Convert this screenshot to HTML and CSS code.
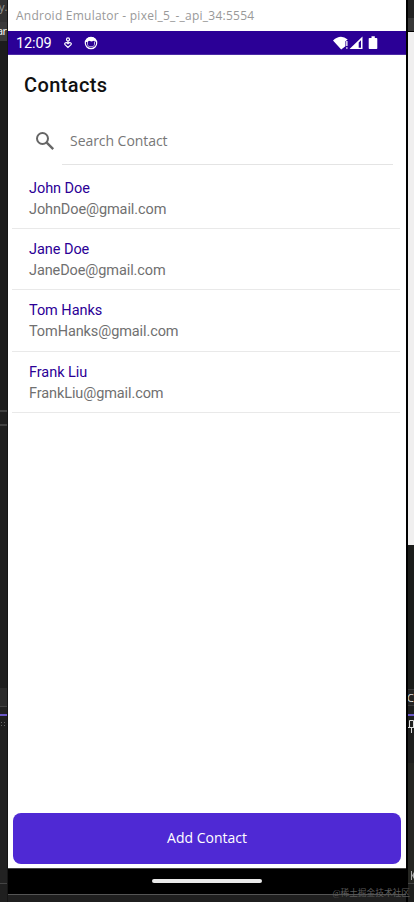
FILE: index.html
```html
<!DOCTYPE html>
<html lang="en">
<head>
<meta charset="utf-8">
<title>Contacts</title>
<link rel="stylesheet" href="styles.css">
</head>
<body>
<div class="desktop">
  <aside class="side left">
    <div class="menu"><span>y.</span></div>
    <div class="tab"><span>ar</span></div>
    <div class="editor"></div>
    <div class="pane"></div>
    <div class="toolbar"></div>
    <div class="accent"></div>
    <div class="dots"></div>
    <div class="panel"></div>
  </aside>
  <main class="window">
    <header class="titlebar"><span>Android Emulator - pixel_5_-_api_34:5554</span></header>
    <div class="status">
      <time>12:09</time>
      <svg class="download" width="10" height="12" viewBox="0 0 10 12" fill="none" stroke="currentColor" stroke-width="1.2"><circle cx="5" cy="2.4" r="1.5"/><path d="M5 4v2M5 10.500 2 7.700C.8 5.800 3.600 4.600 5 6.700 6.400 4.600 9.200 5.800 8 7.700Z"/></svg>
      <svg class="face" width="14" height="14" viewBox="0 0 14 14"><circle cx="7" cy="7" r="5.7" fill="none" stroke="currentColor" stroke-width="1.2"/><path d="M1.500 6C2 2.500 4 1 7 1s5 1.500 5.500 5L10 4.800 7.500 5.500 5 4.800 3.500 6Z" fill="currentColor"/><path d="M3.500 5.500v3c0 3 7 3 7 0v-3" fill="none" stroke="currentColor" stroke-width=".7"/></svg>
      <svg class="radio" width="47" height="16" viewBox="0 0 47 16" fill="currentColor"><path d="M0 5.500Q7.500-1.500 14.700 4.500L12.400 6.200v5L8.200 14.500Z"/><path d="M13.200 6h1.300v5h-1.300zM13.200 12.300h1.300v1.500h-1.300z"/><path fill-rule="evenodd" d="M16.500 14 29.500 1.500V14ZM25.700 7.500V12.700H28V5.200Z"/><path d="M36.500 3h2V1.300h3.300V3h1.700q.8 0 .8.800v9.500q0 .8-.8.800h-7q-.8 0-.8-.8V3.800q0-.8.800-.8Z"/></svg>
    </div>
    <h1><span>Contacts</span></h1>
    <label class="search">
      <svg width="20" height="20" viewBox="0 0 20 20" fill="none" stroke="currentColor" stroke-width="2"><circle cx="7.500" cy="7.500" r="5.500"/><path d="m11.700 11.700 6.500 6.500" stroke-width="2.400"/></svg>
      <span class="field"><span class="hint">Search Contact</span></span>
    </label>
    <ul>
      <li><b><span>John Doe</span></b><p><span>JohnDoe@gmail.com</span></p></li>
      <li><b><span>Jane Doe</span></b><p><span>JaneDoe@gmail.com</span></p></li>
      <li><b><span>Tom Hanks</span></b><p><span>TomHanks@gmail.com</span></p></li>
      <li><b><span>Frank Liu</span></b><p><span>FrankLiu@gmail.com</span></p></li>
    </ul>
    <button><span>Add Contact</span></button>
    <footer><i></i></footer>
  </main>
  <aside class="side right">
    <div class="menu"></div>
    <div class="tab"></div>
    <div class="page"></div>
    <div class="pane"></div>
    <div class="toolbar"><span>C</span></div>
    <div class="gap"></div>
    <div class="accent"></div>
    <div class="pin"><svg width="6" height="13" viewBox="0 0 6 13" fill="none" stroke="currentColor"><path d="M1.500 7V.500H5.500V7M0 7.500h6M3.500 8v5"/></svg></div>
    <div class="panel"><svg width="3" height="9" viewBox="0 0 3 9" fill="currentColor"><path d="M0 0h1v9H0zM3 1v7L1 4.500Z"/></svg></div>
  </aside>
  <div class="watermark">@稀土掘金技术社区</div>
</div>
</body>
</html>
```
FILE: styles.css
```css
* { box-sizing: border-box; }
body { margin: 0; background: #1f1f1f; }
.desktop {
  position: relative;
  display: grid;
  grid-template-columns: 8px 398px 8px;
  width: 414px;
  height: 902px;
  overflow: hidden;
  font-family: "Roboto", sans-serif;
  white-space: nowrap;
}
svg { display: block; flex: none; }

.side { display: flex; flex-direction: column; overflow: hidden; background: #1f1f1f; color: #ddd; }
.side > div { flex: none; overflow: hidden; }
.left { border-right: 1px solid #151515; }
.left .menu { height: 22px; background: #333; color: #999; font: 11px/14px "Open Sans", sans-serif; }
.left .menu span { margin-left: -1px; }
.left .tab { height: 19px; background: #3a3a3a; font: 11px/17px "Open Sans", sans-serif; color: #fff; }
.left .tab span { margin-left: -3px; letter-spacing: -.5px; }
.left .editor { height: 369px; background: #1c1c1c; }
.left .pane { height: 278px; background: linear-gradient(#414141 2px, #1f1f1f 2px 14px, #414141 14px 16px, #1f1f1f 16px); }
.left .toolbar { height: 26px; background: linear-gradient(#2c2c2c 18px, #444 18px 19px, #222 19px); }
.accent { height: 2px; background: #6a57c6; }
.left .dots { height: 14px; background: radial-gradient(#666 .6px, transparent .8px) 0 2px / 3px 3px; background-clip: content-box; padding: 6px 0 2px; }
.left .panel { height: 154px; background: #222; border-bottom: 1px solid #444; }

.window { display: flex; flex-direction: column; height: 895px; padding-top: 1px; border-bottom: 1px solid #555; background: #fff; min-width: 0; }
.titlebar { height: 30px; padding-left: 8px; color: #999; font: 12px/30px "Open Sans", sans-serif; letter-spacing: .24px; }
.status { display: flex; align-items: center; height: 24px; padding-left: 8px; background: #2b0096; color: #fff; border-bottom: 1px solid #4c2ba5; }
.status time { width: 47px; padding-top: 2px; font-size: 14.500px; line-height: 22px; letter-spacing: -.1px; }
.status .face { margin-left: 11px; }
.status .radio { margin-left: 235px; }
h1 { margin: 0; height: 66px; padding-left: 16px; color: #111; font-size: 20px; font-weight: 500; line-height: 60px; letter-spacing: .38px; }
.search { display: flex; height: 44px; color: #666; }
.search svg { margin: 10px 7px 0 27px; }
.field { width: 331px; padding-left: 8px; border-bottom: 1px solid #e4e4e4; font: 14px/40px "Open Sans", sans-serif; letter-spacing: -.05px; color: #777; }
ul { margin: 0; padding: 0 6px 0 4px; list-style: none; }
li { height: 61px; padding: 10px 17px 0; border-bottom: 1px solid #e9e9e9; }
li:first-child { height: 64px; padding-top: 13px; }
li:nth-child(3) { height: 62px; padding-top: 10px; }
b, p { display: block; margin: 0; font-size: 14.500px; font-weight: 400; line-height: 21px; letter-spacing: -.05px; }
b { color: #2b0096; }
p { color: #707070; letter-spacing: -.1px; }
button { height: 51px; margin: auto 5px 4px; padding: 0 0 1px; border: 0; border-radius: 8px; background: #4f29d4; color: #fff; font: 14px/50px "Open Sans", sans-serif; }
footer { display: flex; align-items: center; justify-content: center; height: 26px; padding-bottom: 2px; background: #000; border-top: 1px solid #444; }
footer i { width: 110px; height: 4px; border-radius: 2px; background: #e9e9e9; }

.right { border-left: 2px solid #000; background: #1e1f1e; }
.right .menu { height: 18px; background: #222; }
.right .tab { height: 14px; background: #383838; border-bottom: 1px solid #000; }
.right .page { height: 513px; background: #f0efef; }
.right .pane { height: 144px; background: #1b1c1a; }
.right .toolbar { height: 17px; background: #242424; border: solid #393939; border-width: 1px 0; font: 11px/15px "Open Sans", sans-serif; }
.right .toolbar span { margin-left: -1px; }
.right .gap { height: 8px; }
.right .pin { height: 47px; padding-top: 4px; }
.right .panel { height: 121px; padding-top: 108px; background: #252622; border-bottom: 1px solid #444; color: #aaa; }
.right .panel svg { margin-left: 3px; }
.watermark { position: absolute; right: 4px; bottom: 2px; color: #5b5b5b; font: 8.700px/14px "Liberation Serif", "Noto Sans CJK SC", serif; }
```
